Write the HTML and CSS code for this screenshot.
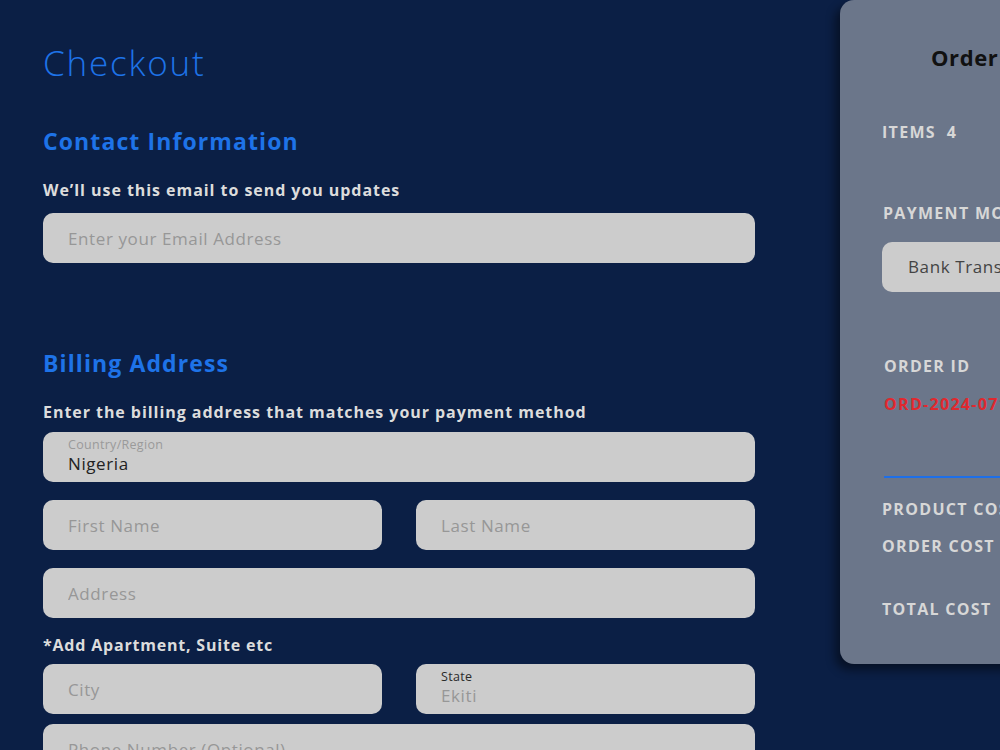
FILE: index.html
```html
<!DOCTYPE html>
<html lang="en">
 <head>
  <meta charset="utf-8"/>
  <title>Checkout</title>
  <link rel="stylesheet" href="styles.css">
 </head>
 <body>
	<div class="page">
		<main class="checkout">
			<h1>Checkout</h1>

			<section class="contact">
				<h2>Contact Information</h2>
				<p class="hint">We’ll use this email to send you updates</p>
				<input class="field" type="email" placeholder="Enter your Email Address"/>
			</section>

			<section class="billing">
				<h2>Billing Address</h2>
				<p class="hint">Enter the billing address that matches your payment method</p>
				<div class="form">
					<div class="field labelled">
						<span class="label">Country/Region</span>
						<span class="value">Nigeria</span>
					</div>
					<div class="row">
						<input class="field" type="text" placeholder="First Name"/>
						<input class="field" type="text" placeholder="Last Name"/>
					</div>
					<input class="field" type="text" placeholder="Address"/>
					<p class="hint extra">*Add Apartment, Suite etc</p>
					<div class="row">
						<input class="field" type="text" placeholder="City"/>
						<div class="field labelled">
							<span class="label dark">State</span>
							<span class="value empty">Ekiti</span>
						</div>
					</div>
					<input class="field phone" type="tel" placeholder="Phone Number (Optional)"/>
				</div>
			</section>
		</main>

		<aside class="summary">
			<h3>Order Summary</h3>
			<p class="key items">Items&nbsp; 4</p>

			<p class="key pay">Payment Mode</p>
			<div class="select">Bank Transfer</div>

			<p class="key oid">Order ID</p>
			<p class="order-no">ORD-2024-0719-5832</p>

			<hr class="rule"/>

			<p class="key cost">Product Cost</p>
			<p class="key cost">Order Cost</p>
			<p class="key total">Total Cost</p>
		</aside>
	</div>
 </body>
</html>
```

FILE: styles.css
```css
*{margin:0; padding:0; box-sizing:border-box;}
html, body{ overflow:hidden; }
body{ background-color:#0b1f45; font-family:"Open Sans", "Noto Sans", sans-serif; color:#ddd; }

.page{ display:flex; align-items:flex-start; width:1400px; }

/* left column */
.checkout{ width:755px; padding:43px 0 0 43px; flex-shrink:0; }
	.checkout h1{ font-size:35px; line-height:40px; font-weight:300; color:#1e73e8; letter-spacing:1.8px; }
	.checkout h2{ font-size:23px; line-height:30px; font-weight:700; color:#1e73e8; letter-spacing:1.1px; }
	.hint{ font-size:16px; line-height:20px; font-weight:700; color:#dcdcdc; letter-spacing:0.95px; }

	.contact{ margin-top:43px; }
		.contact .hint{ margin-top:24px; margin-bottom:13px; }

	.billing{ margin-top:85px; }
		.billing > .hint{ margin-top:24px; margin-bottom:10px; }

	.form{ display:flex; flex-direction:column; gap:18px; }
		.row{ display:flex; gap:34px; }
			.row .field{ flex:1; min-width:0; }

.field{ display:block; width:100%; height:50px; border:none; outline:none; border-radius:10px; background-color:#cccccc;
	padding:0 25px; font-family:inherit; font-size:17px; color:#222; letter-spacing:0.6px; }
.field::placeholder{ color:#979797; }

.labelled{ display:flex; flex-direction:column; justify-content:center; }
	.labelled .label{ font-size:12.5px; line-height:16px; color:#9a9a9a; letter-spacing:0.3px; margin-top:-3px; }
	.labelled .label.dark{ color:#2a2a2a; }
	.labelled .value{ font-size:17px; line-height:22px; color:#222; }
	.labelled .value.empty{ color:#979797; }

.form .extra{ margin:-1px 0 -9px; letter-spacing:0.8px; }
.form .phone{ margin-top:-8px; }

/* right panel */
.summary{ width:360px; height:664px; margin-left:85px; flex-shrink:0; background-color:#6b768a;
	border-radius:14px; box-shadow:-5px 6px 10px rgba(0,0,0,0.45); padding:44px 0 0 42px; }
	.summary h3{ font-size:22px; line-height:26px; font-weight:700; color:#111; padding-left:49px; letter-spacing:0.6px; }
	.key{ font-size:16px; line-height:20px; font-weight:700; color:#d7d7d7; text-transform:uppercase; letter-spacing:1.3px; }
	.items{ margin-top:52px; }
	.pay{ margin-top:61px; margin-left:1px; }
	.select{ margin-top:19px; height:50px; border-radius:10px; background-color:#cccccc; padding-left:26px;
		font-size:17px; line-height:50px; color:#444; letter-spacing:0.6px; }
	.oid{ margin-top:64px; margin-left:2px; }
	.order-no{ margin-top:18px; margin-left:2px; font-size:16px; line-height:20px; font-weight:700; color:#e0282e; letter-spacing:1.3px; }
	.rule{ margin-top:62px; margin-left:2px; border:none; height:2px; background-color:#1e6fe8; }
	.cost{ margin-top:21px; }
	.cost + .cost{ margin-top:17px; }
	.total{ margin-top:43px; }
```
